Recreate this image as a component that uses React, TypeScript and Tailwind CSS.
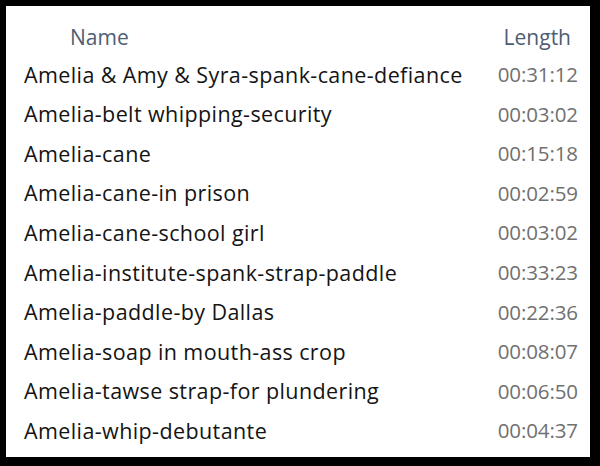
const rows: [string, string][] = [
  ["Amelia & Amy & Syra-spank-cane-defiance", "00:31:12"],
  ["Amelia-belt whipping-security", "00:03:02"],
  ["Amelia-cane", "00:15:18"],
  ["Amelia-cane-in prison", "00:02:59"],
  ["Amelia-cane-school girl", "00:03:02"],
  ["Amelia-institute-spank-strap-paddle", "00:33:23"],
  ["Amelia-paddle-by Dallas", "00:22:36"],
  ["Amelia-soap in mouth-ass crop", "00:08:07"],
  ["Amelia-tawse strap-for plundering", "00:06:50"],
  ["Amelia-whip-debutante", "00:04:37"],
];

export default function App() {
  return (
    <div className="w-[600px] h-[466px] bg-black pt-[6px] pl-[6px] pr-[10px] pb-[9px]">
      <div
        className="h-full bg-white flex flex-col"
        style={{ fontFamily: '"Open Sans", "Noto Sans", sans-serif' }}
      >
        <div className="flex items-center h-[48px] pt-[14px] text-[21px] leading-none text-[#4d5d73]">
          <div className="pl-[64px] flex-1">Name</div>
          <div className="pr-[19px]">Length</div>
        </div>
        {rows.map(([name, len]) => (
          <div key={name} className="flex items-center h-[39.6px] pt-[1px] leading-none">
            <div className="pl-[18px] flex-1 text-[21.5px] text-[#141414] tracking-[0.4px]">{name}</div>
            <div className="pr-[12px] text-[20.5px] text-[#707070] tracking-[-0.1px]">{len}</div>
          </div>
        ))}
      </div>
    </div>
  );
}
